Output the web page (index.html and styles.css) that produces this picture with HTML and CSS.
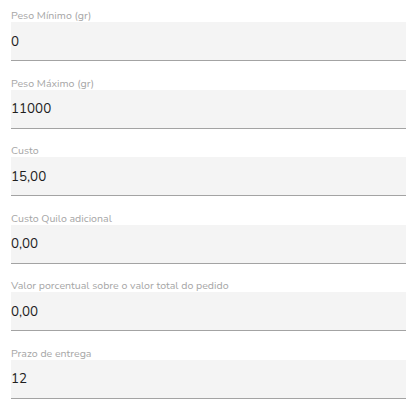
FILE: index.html
```html
<!DOCTYPE html>
<html lang="pt-br">
<head>
    <meta charset="UTF-8">
    <meta name="viewport" content="width=device-width, initial-scale=1.0">
    <title>Faixa de frete</title>
    <link rel="stylesheet" href="styles.css">
</head>
<body>
    <div class="form">
        <div class="campo">
            <label for="pesoMin">Peso Mínimo (gr)</label>
            <input type="text" id="pesoMin" value="0">
        </div>
        <div class="campo">
            <label for="pesoMax">Peso Máximo (gr)</label>
            <input type="text" id="pesoMax" value="11000">
        </div>
        <div class="campo">
            <label for="custo">Custo</label>
            <input type="text" id="custo" value="15,00">
        </div>
        <div class="campo">
            <label for="custoQuilo">Custo Quilo adicional</label>
            <input type="text" id="custoQuilo" value="0,00">
        </div>
        <div class="campo">
            <label for="porcentual">Valor porcentual sobre o valor total do pedido</label>
            <input type="text" id="porcentual" value="0,00">
        </div>
        <div class="campo">
            <label for="prazo">Prazo de entrega</label>
            <input type="text" id="prazo" value="12">
        </div>
    </div>
</body>
</html>
```
FILE: styles.css
```css
* {
    box-sizing: border-box;
    margin: 0;
    padding: 0;
    font-family: 'Nunito', 'Lato', sans-serif;
}

body {
    background-color: #fff;
    color: #222;
}

.form {
    padding: 8px 0 0 11px;
}

.campo {
    margin-bottom: 14.6px;
}

.campo label {
    display: block;
    font-size: 10.6px;
    line-height: 14px;
    padding-top: 1px;
    height: 14px;
    color: #a6a6a6;
}

.campo input {
    display: block;
    width: 100%;
    height: 39px;
    border: none;
    border-bottom: 1px solid #a3a3a3;
    background-color: #f4f4f4;
    font-size: 13.4px;
    line-height: 38px;
    color: #1e1e1e;
    outline: none;
}
```
